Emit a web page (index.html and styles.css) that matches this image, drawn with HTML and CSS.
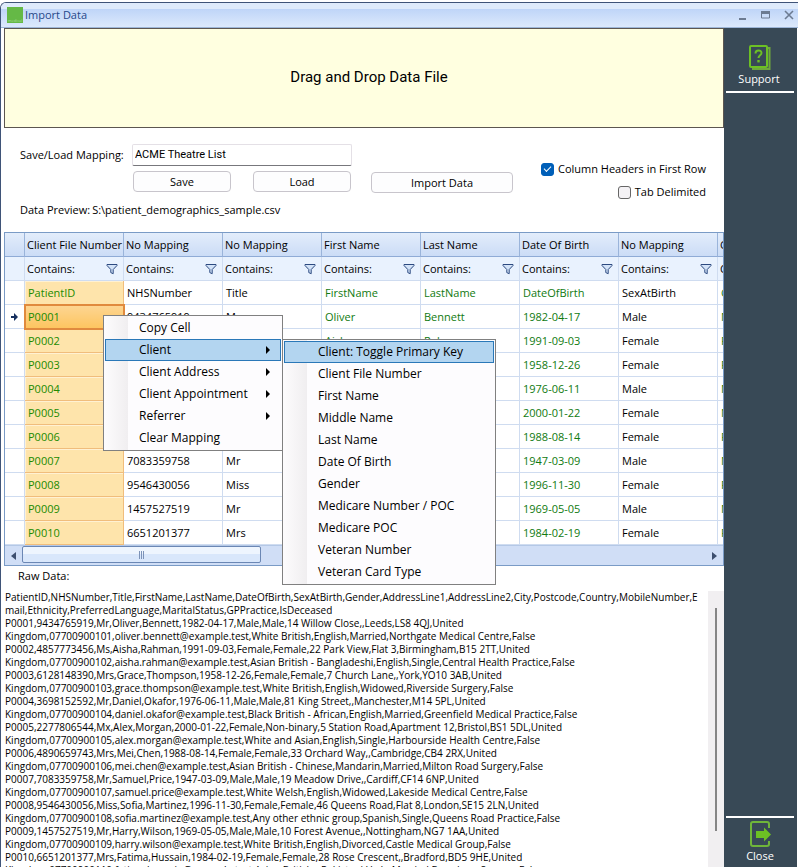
FILE: index.html
```html
<!DOCTYPE html>
<html lang="en">
<head>
  <meta charset="UTF-8">
  <title>Import Data</title>
  <link rel="stylesheet" href="styles.css">
</head>
<body>
  <svg class="defs" width="0" height="0" aria-hidden="true">
    <symbol id="funnel" viewBox="0 0 12 12">
      <path d="M1 1.5h10v1L7.2 6.5v4.2L4.8 9.6V6.5L1 2.5z" fill="#d3e3f8" stroke="#2c4a80" stroke-width="1"/>
    </symbol>
  </svg>

  <div class="window">
    <header class="titlebar">
      <span class="app-icon">medical</span>
      <h1>Import Data</h1>
      <div class="window-buttons">
        <button type="button" aria-label="Minimize">
          <svg width="10" height="10" viewBox="0 0 10 10"><path d="M1 8h7v2H1z" fill="#6c7b92"/></svg>
        </button>
        <button type="button" aria-label="Maximize">
          <svg width="10" height="10" viewBox="0 0 10 10"><path d="M.5 2h8v6h-8z" fill="none" stroke="#6c7b92"/><path d="M0 1h9v3H0z" fill="#6c7b92"/></svg>
        </button>
        <button type="button" aria-label="Close window">
          <svg width="10" height="10" viewBox="0 0 10 10"><path d="M1 1l8 8M9 1L1 9" stroke="#6c7b92" stroke-width="1.6"/></svg>
        </button>
      </div>
    </header>

    <div class="content">
      <main>
        <div class="drop-zone">Drag and Drop Data File</div>

        <form class="mapping">
          <label for="mapping-name">Save/Load Mapping:</label>
          <div class="mapping-fields">
            <input type="text" id="mapping-name" value="ACME Theatre List">
            <div class="mapping-actions">
              <button type="button">Save</button>
              <button type="button">Load</button>
            </div>
          </div>
          <button type="button" class="import">Import Data</button>
          <div class="options">
            <label><input type="checkbox" checked> Column Headers in First Row</label>
            <label><input type="checkbox"> Tab Delimited</label>
          </div>
        </form>
        <p class="preview-path"><span>Data Preview:</span> <span>S:\patient_demographics_sample.csv</span></p>

        <div class="grid">
          <table>
            <colgroup>
              <col class="col-marker">
              <col span="8">
            </colgroup>
            <thead>
              <tr>
                <th></th><th>Client File Number</th><th>No Mapping</th><th>No Mapping</th><th>First Name</th><th>Last Name</th><th>Date Of Birth</th><th>No Mapping</th><th>Gender</th>
              </tr>
              <tr class="filters">
                <td></td>
                <td><div>Contains: <svg><use href="#funnel"/></svg></div></td>
                <td><div>Contains: <svg><use href="#funnel"/></svg></div></td>
                <td><div>Contains: <svg><use href="#funnel"/></svg></div></td>
                <td><div>Contains: <svg><use href="#funnel"/></svg></div></td>
                <td><div>Contains: <svg><use href="#funnel"/></svg></div></td>
                <td><div>Contains: <svg><use href="#funnel"/></svg></div></td>
                <td><div>Contains: <svg><use href="#funnel"/></svg></div></td>
                <td><div>Contains: <svg><use href="#funnel"/></svg></div></td>
              </tr>
            </thead>
            <tbody>
              <tr><td></td><td class="key">PatientID</td><td>NHSNumber</td><td>Title</td><td class="mapped">FirstName</td><td class="mapped">LastName</td><td class="mapped">DateOfBirth</td><td>SexAtBirth</td><td class="mapped">Gender</td></tr>
              <tr>
                <td class="marker"><svg width="8" height="8" viewBox="0 0 8 8"><path d="M0 3h3V0l4 4-4 4V5H0z" fill="#16305f"/></svg></td>
                <td class="key selected">P0001</td><td>9434765919</td><td>Mr</td><td class="mapped">Oliver</td><td class="mapped">Bennett</td><td class="mapped">1982-04-17</td><td>Male</td><td class="mapped">Male</td>
              </tr>
              <tr><td></td><td class="key">P0002</td><td>4857773456</td><td>Ms</td><td class="mapped">Aisha</td><td class="mapped">Rahman</td><td class="mapped">1991-09-03</td><td>Female</td><td class="mapped">Female</td></tr>
              <tr><td></td><td class="key">P0003</td><td>6128148390</td><td>Mrs</td><td class="mapped">Grace</td><td class="mapped">Thompson</td><td class="mapped">1958-12-26</td><td>Female</td><td class="mapped">Female</td></tr>
              <tr><td></td><td class="key">P0004</td><td>3698152592</td><td>Mr</td><td class="mapped">Daniel</td><td class="mapped">Okafor</td><td class="mapped">1976-06-11</td><td>Male</td><td class="mapped">Male</td></tr>
              <tr><td></td><td class="key">P0005</td><td>2277806544</td><td>Mx</td><td class="mapped">Alex</td><td class="mapped">Morgan</td><td class="mapped">2000-01-22</td><td>Female</td><td class="mapped">Non-binary</td></tr>
              <tr><td></td><td class="key">P0006</td><td>4890659743</td><td>Mrs</td><td class="mapped">Mei</td><td class="mapped">Chen</td><td class="mapped">1988-08-14</td><td>Female</td><td class="mapped">Female</td></tr>
              <tr><td></td><td class="key">P0007</td><td>7083359758</td><td>Mr</td><td class="mapped">Samuel</td><td class="mapped">Price</td><td class="mapped">1947-03-09</td><td>Male</td><td class="mapped">Male</td></tr>
              <tr><td></td><td class="key">P0008</td><td>9546430056</td><td>Miss</td><td class="mapped">Sofia</td><td class="mapped">Martinez</td><td class="mapped">1996-11-30</td><td>Female</td><td class="mapped">Female</td></tr>
              <tr><td></td><td class="key">P0009</td><td>1457527519</td><td>Mr</td><td class="mapped">Harry</td><td class="mapped">Wilson</td><td class="mapped">1969-05-05</td><td>Male</td><td class="mapped">Male</td></tr>
              <tr><td></td><td class="key">P0010</td><td>6651201377</td><td>Mrs</td><td class="mapped">Fatima</td><td class="mapped">Hussain</td><td class="mapped">1984-02-19</td><td>Female</td><td class="mapped">Female</td></tr>
            </tbody>
          </table>
          <div class="hscroll">
            <button type="button" aria-label="Scroll left"><svg width="5" height="8" viewBox="0 0 5 8"><path d="M5 0v8L0 4z" fill="#3c4e6e"/></svg></button>
            <div class="hscroll-track"><div class="hscroll-thumb"><i></i><i></i><i></i></div></div>
            <button type="button" aria-label="Scroll right"><svg width="5" height="8" viewBox="0 0 5 8"><path d="M0 0v8l5-4z" fill="#3c4e6e"/></svg></button>
          </div>
        </div>

        <label class="raw-label" for="raw-data">Raw Data:</label>
        <div class="raw">
          <textarea id="raw-data" readonly>PatientID,NHSNumber,Title,FirstName,LastName,DateOfBirth,SexAtBirth,Gender,AddressLine1,AddressLine2,City,Postcode,Country,MobileNumber,E
mail,Ethnicity,PreferredLanguage,MaritalStatus,GPPractice,IsDeceased
P0001,9434765919,Mr,Oliver,Bennett,1982-04-17,Male,Male,14 Willow Close,,Leeds,LS8 4QJ,United
Kingdom,07700900101,oliver.bennett@example.test,White British,English,Married,Northgate Medical Centre,False
P0002,4857773456,Ms,Aisha,Rahman,1991-09-03,Female,Female,22 Park View,Flat 3,Birmingham,B15 2TT,United
Kingdom,07700900102,aisha.rahman@example.test,Asian British - Bangladeshi,English,Single,Central Health Practice,False
P0003,6128148390,Mrs,Grace,Thompson,1958-12-26,Female,Female,7 Church Lane,,York,YO10 3AB,United
Kingdom,07700900103,grace.thompson@example.test,White British,English,Widowed,Riverside Surgery,False
P0004,3698152592,Mr,Daniel,Okafor,1976-06-11,Male,Male,81 King Street,,Manchester,M14 5PL,United
Kingdom,07700900104,daniel.okafor@example.test,Black British - African,English,Married,Greenfield Medical Practice,False
P0005,2277806544,Mx,Alex,Morgan,2000-01-22,Female,Non-binary,5 Station Road,Apartment 12,Bristol,BS1 5DL,United
Kingdom,07700900105,alex.morgan@example.test,White and Asian,English,Single,Harbourside Health Centre,False
P0006,4890659743,Mrs,Mei,Chen,1988-08-14,Female,Female,33 Orchard Way,,Cambridge,CB4 2RX,United
Kingdom,07700900106,mei.chen@example.test,Asian British - Chinese,Mandarin,Married,Milton Road Surgery,False
P0007,7083359758,Mr,Samuel,Price,1947-03-09,Male,Male,19 Meadow Drive,,Cardiff,CF14 6NP,United
Kingdom,07700900107,samuel.price@example.test,White Welsh,English,Widowed,Lakeside Medical Centre,False
P0008,9546430056,Miss,Sofia,Martinez,1996-11-30,Female,Female,46 Queens Road,Flat 8,London,SE15 2LN,United
Kingdom,07700900108,sofia.martinez@example.test,Any other ethnic group,Spanish,Single,Queens Road Practice,False
P0009,1457527519,Mr,Harry,Wilson,1969-05-05,Male,Male,10 Forest Avenue,,Nottingham,NG7 1AA,United
Kingdom,07700900109,harry.wilson@example.test,White British,English,Divorced,Castle Medical Group,False
P0010,6651201377,Mrs,Fatima,Hussain,1984-02-19,Female,Female,28 Rose Crescent,,Bradford,BD5 9HE,United
Kingdom,07700900110,fatima.hussain@example.test,Asian British - Pakistani,Urdu,Married,Broadway Surgery,False</textarea>
          <div class="vscroll"><div class="vscroll-thumb"></div></div>
        </div>
      </main>

      <aside class="sidebar">
        <button type="button" class="support">
          <svg width="24" height="28" viewBox="0 0 24 28">
            <path d="M20 5h2.500v21H6v-2.500" fill="none" stroke="#6fa83c" stroke-width="2"/>
            <rect x="3" y="3" width="17" height="21" rx="1" fill="none" stroke="#6cc024" stroke-width="2"/>
            <path d="M8.500 10.500c0-4 6-4 6-.5 0 2.400-3 2.200-3 5" fill="none" stroke="#6cc024" stroke-width="2"/>
            <path d="M10.300 17h2.400v2.400h-2.400z" fill="#6cc024"/>
          </svg>
          Support
        </button>
        <button type="button" class="close">
          <svg width="24" height="28" viewBox="0 0 24 28">
            <path d="M21 8V4q0-2-2-2H5Q3 2 3 4v20q0 2 2 2h14q2 0 2-2v-3" fill="none" stroke="#6fb53a" stroke-width="2"/>
            <path d="M8 11h8V7.500l7 7-7 7V18H8z" fill="#6cc024"/>
          </svg>
          Close
        </button>
      </aside>
    </div>

    <ul class="menu context-menu">
      <li><button type="button">Copy Cell</button></li>
      <li>
        <button type="button" class="active has-sub">Client</button>
        <ul class="menu submenu">
          <li><button type="button" class="active">Client: Toggle Primary Key</button></li>
          <li><button type="button">Client File Number</button></li>
          <li><button type="button">First Name</button></li>
          <li><button type="button">Middle Name</button></li>
          <li><button type="button">Last Name</button></li>
          <li><button type="button">Date Of Birth</button></li>
          <li><button type="button">Gender</button></li>
          <li><button type="button">Medicare Number / POC</button></li>
          <li><button type="button">Medicare POC</button></li>
          <li><button type="button">Veteran Number</button></li>
          <li><button type="button">Veteran Card Type</button></li>
        </ul>
      </li>
      <li><button type="button" class="has-sub">Client Address</button></li>
      <li><button type="button" class="has-sub">Client Appointment</button></li>
      <li><button type="button" class="has-sub">Referrer</button></li>
      <li><button type="button">Clear Mapping</button></li>
    </ul>
  </div>
</body>
</html>
```
FILE: styles.css
```css
* {
  box-sizing: border-box;
}

body {
  margin: 0;
  padding-top: 2px;
  height: 100vh;
  overflow: hidden;
  background: #fff;
  color: #000;
  font-family: "Open Sans", "Noto Sans", sans-serif;
  font-size: 11px;
  line-height: 16px;
}

button, input, textarea {
  font: inherit;
  color: inherit;
}

button {
  padding: 0;
  border: none;
  background: none;
}

.defs {
  position: absolute;
}

.window {
  position: relative;
  display: flex;
  flex-direction: column;
  height: 100%;
  border-left: 1px solid #3f5478;
  border-top: 1px solid #3f5478;
  border-top-left-radius: 6px;
}

/* title bar */
.titlebar {
  display: flex;
  align-items: center;
  flex: none;
  height: 25px;
  padding: 0 4px 0 6px;
  border-bottom: 1px solid #9db6d8;
  border-top-left-radius: 5px;
  background: linear-gradient(#dfebfb 0, #dfebfb 6px, #bfd5f8 6px, #dce9fc 100%);
}

.titlebar h1 {
  margin: 0 0 0 2px;
  color: #26488a;
  font-size: 11px;
  font-weight: normal;
}

.app-icon {
  display: flex;
  align-items: flex-end;
  justify-content: center;
  width: 16px;
  height: 16px;
  background: #65b946;
  color: #a9dc93;
  font-size: 4px;
  line-height: 5px;
}

.window-buttons {
  display: flex;
  gap: 13px;
  margin-left: auto;
}

.window-buttons button, .window-buttons svg {
  display: block;
}

.content {
  display: flex;
  flex: 1;
  min-height: 0;
}

main {
  display: flex;
  flex-direction: column;
  flex: 1;
  min-width: 0;
  padding-left: 3px;
}

.drop-zone {
  display: flex;
  align-items: center;
  justify-content: center;
  flex: none;
  height: 100px;
  padding: 0 0 2px 10px;
  border: 1px solid #5c5650;
  background: #ffffe0;
  font-family: Roboto, Arial, sans-serif;
  font-size: 15px;
}

/* mapping form */
.mapping {
  display: flex;
  align-items: flex-start;
  padding: 16px 18px 0 16px;
}

.mapping > label {
  width: 112px;
  padding-top: 3px;
  white-space: nowrap;
}

.mapping-fields {
  width: 220px;
}

.mapping-fields input {
  display: block;
  width: 100%;
  height: 22px;
  padding: 0 2px 2px;
  border: 1px solid #e4e0e6;
  border-bottom-color: #77777c;
  border-radius: 2px;
  background: #fff;
  font-family: Roboto, Arial, sans-serif;
  font-size: 11px;
}

.mapping-actions {
  display: flex;
  justify-content: space-between;
  padding: 5px 1px 0;
}

.mapping button {
  width: 98px;
  height: 21px;
  border: 1px solid #c8c5cc;
  border-radius: 4px;
  background: #fdfdfe;
}

.mapping .import {
  width: 142px;
  margin: 28px 0 0 19px;
}

.options {
  display: flex;
  flex-direction: column;
  align-items: flex-end;
  gap: 7px;
  margin: 17px 0 0 auto;
}

.options label {
  display: flex;
  align-items: center;
  gap: 4px;
}

.options input {
  display: grid;
  place-items: center;
  appearance: none;
  width: 13px;
  height: 13px;
  margin: 0;
  border: 1px solid #666;
  border-radius: 3px;
  background: #f4f2f5;
}

.options input:checked {
  border-color: #005fb8;
  background: #005fb8;
}

.options input:checked::after {
  content: "";
  width: 6px;
  height: 3px;
  margin-bottom: 2px;
  border-left: 1px solid #fff;
  border-bottom: 1px solid #fff;
  transform: rotate(-45deg);
}

.preview-path {
  display: flex;
  gap: 2px;
  flex: none;
  margin: 0;
  padding: 2px 16px 14px;
}

/* data grid */
.grid {
  flex: none;
  overflow: hidden;
  border: 1px solid #7a9bc6;
}

.grid table {
  width: 812px;
  table-layout: fixed;
  border-collapse: separate;
  border-spacing: 0;
}

.col-marker {
  width: 20px;
}

.grid th, .grid td {
  height: 24px;
  padding: 0 3px;
  border-right: 1px solid #cfdcf0;
  border-bottom: 1px solid #cfdcf0;
  white-space: nowrap;
  font-weight: normal;
  text-align: left;
}

.grid th {
  padding: 0 2px;
  border-right-color: #9ab4da;
  border-bottom-color: #8fabd6;
  background: linear-gradient(#e3edfb, #cbdcf6);
}

.grid .filters td {
  padding: 0 2px;
  background: #e9f2fe;
}

.filters div {
  display: flex;
  align-items: center;
  justify-content: space-between;
  padding-right: 3px;
}

.filters svg {
  width: 12px;
  height: 12px;
}

.grid .mapped {
  color: #107a10;
}

.grid .key {
  border-color: #f0bd7c;
  background: #fee4ab;
  box-shadow: inset 1px 1px #fff1d2;
  color: #228b00;
}

.grid .selected {
  background: linear-gradient(#fdd694, #fdc560);
  box-shadow: none;
  outline: 2px solid #e08a3e;
  outline-offset: -1px;
}

.grid .marker {
  padding: 0;
  text-align: center;
}

.marker svg {
  display: block;
  margin: 0 auto;
}

.hscroll {
  display: flex;
  height: 20px;
  border-top: 1px solid #b4c8e6;
  background: #d0def6;
}

.hscroll button {
  display: grid;
  place-items: center;
  width: 17px;
}

.hscroll-track {
  flex: 1;
}

.hscroll-thumb {
  display: flex;
  align-items: center;
  justify-content: center;
  gap: 1px;
  width: 35%;
  height: 17px;
  border: 1px solid #6b87b4;
  border-radius: 2px;
  background: linear-gradient(#eef5fe 45%, #d9e7fb 50%);
}

.hscroll-thumb i {
  width: 1px;
  height: 8px;
  background: #7d93b8;
}

/* raw data */
.raw-label {
  padding: 2px 14px 7px;
}

.raw {
  display: flex;
  flex: 1;
  min-height: 0;
}

.raw textarea {
  flex: 1;
  min-width: 0;
  padding: 0 0 0 1px;
  border: none;
  outline: none;
  resize: none;
  overflow: hidden;
  background: none;
  white-space: pre;
  font-size: 10px;
  line-height: 13px;
}

.vscroll {
  width: 16px;
  padding: 17px 7px 36px;
  background: #f1eff1;
}

.vscroll-thumb {
  width: 2px;
  height: 100%;
  background: #858585;
}

/* sidebar */
.sidebar {
  display: flex;
  flex-direction: column;
  justify-content: space-between;
  width: 73px;
  margin-right: 1px;
  padding: 0 3px 0 2px;
  background: #384956;
}

.sidebar button {
  display: flex;
  flex-direction: column;
  align-items: center;
  width: 100%;
  color: #fff;
}

.sidebar .support {
  padding: 15px 2px 4px 0;
  border-bottom: 2px solid #fff;
}

.sidebar .close {
  padding: 2px 0 3px;
  border-top: 2px solid #fff;
}

/* menus */
.menu {
  position: absolute;
  margin: 0;
  padding: 1px;
  list-style: none;
  border: 1px solid #808080;
  background: linear-gradient(to right, #fdfcfd, #f0eef0 24px, #fdfcfe 24px);
  font-size: 12px;
}

.menu li {
  position: relative;
}

.menu button {
  display: flex;
  align-items: center;
  justify-content: space-between;
  width: 100%;
  height: 22px;
  padding: 0 10px 0 33px;
  border: 1px solid transparent;
  text-align: left;
  white-space: nowrap;
}

.menu .active {
  border-color: #2a78b8;
  background: #b3d5f0;
}

.has-sub::after {
  content: "";
  border: 4px solid transparent;
  border-left-color: #000;
  border-right: none;
}

.context-menu {
  left: 102px;
  top: 312px;
  width: 180px;
}

.submenu {
  left: 177px;
  top: 0;
  width: 214px;
}
```
